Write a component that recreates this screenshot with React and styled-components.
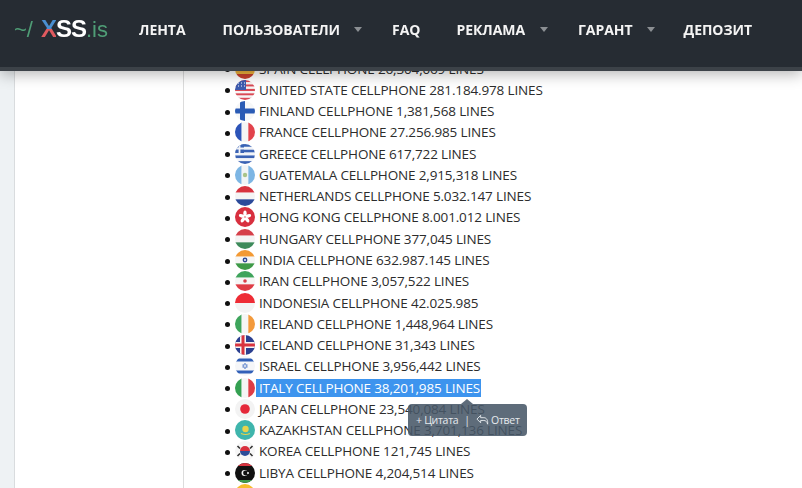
import React from 'react';
import styled, { createGlobalStyle } from 'styled-components';

const GlobalStyle = createGlobalStyle`
  html, body {
    margin: 0;
    height: 488px;
    overflow: hidden;
    background: #fff;
    font-family: "Open Sans", "Liberation Sans", sans-serif;
  }
`;

const Page = styled.div`
  display: grid;
  grid-template-columns: 15px 169px 1fr;
  height: 488px;
  overflow: hidden;
`;

const Gutter = styled.div`
  background: #eef2f4;
  border-right: 1px solid #d9dcde;
`;

const Sidebar = styled.aside`
  background: #fff;
  border-right: 1px solid #dcdcdc;
`;

const Content = styled.main`
  padding-top: 58px;
  min-width: 0;
`;

const Header = styled.header`
  position: fixed;
  top: 0;
  left: 0;
  right: 0;
  z-index: 5;
  height: 71px;
  display: flex;
  align-items: center;
  padding: 0 0 9px 14px;
  box-sizing: border-box;
  background: #262c33;
  border-bottom: 4px solid #3c4248;
  box-shadow: 0 3px 14px rgba(0, 0, 0, 0.3);
`;

const Logo = styled.div`
  display: flex;
  align-items: baseline;
  width: 125px;
  font-family: "Liberation Sans", Arial, sans-serif;
`;

const LogoThin = styled.span`
  color: #4f9d76;
  font-size: 22px;
  font-weight: 400;
  margin-right: ${({ $gap }) => $gap || 0}px;
`;

const LogoX = styled.span`
  font-size: 24px;
  font-weight: 700;
  letter-spacing: -1px;
  background: linear-gradient(#4a8fd0 0 50%, #e05a5f 50%);
  -webkit-background-clip: text;
  background-clip: text;
  color: transparent;
`;

const LogoBold = styled.span`
  font-size: 24px;
  font-weight: 700;
  letter-spacing: -1px;
  color: #fff;
`;

const Nav = styled.nav`
  display: flex;
  align-items: center;
`;

const NavItem = styled.a`
  color: #f4f4f4;
  font-size: 14px;
  font-weight: 700;
  letter-spacing: -0.05px;
  white-space: nowrap;
  margin-right: ${({ $gap }) => $gap}px;
`;

const Caret = styled.span`
  width: 0;
  height: 0;
  border-left: 4.5px solid transparent;
  border-right: 4.5px solid transparent;
  border-top: 5px solid #8b8f93;
  margin-right: ${({ $gap }) => $gap}px;
`;

const List = styled.ul`
  margin: 0;
  padding: 0 0 0 41px;
  list-style: none;
  position: relative;
`;

const Row = styled.li`
  height: 21.28px;
  display: flex;
  align-items: center;
  color: #2c2c2c;
  font-size: 13.5px;
  letter-spacing: -0.15px;
  white-space: nowrap;
`;

const Bullet = styled.span`
  width: 5px;
  height: 5px;
  flex: none;
  margin: 2px 5px 0 0;
  border-radius: 50%;
  background: #111;
`;

const FlagDisc = styled.svg`
  width: 20px;
  height: 20px;
  flex: none;
  margin-right: 4px;
  border-radius: 50%;
`;

const Label = styled.span`
  line-height: 18px;
  ${({ $on }) => $on && `
    background: #3d94ee;
    color: #fff;
    margin-left: -3px;
    padding: 0 1px 0 3px;
  `}
`;

const QuoteTip = styled.div`
  position: absolute;
  left: 224px;
  top: 346px;
  width: 119px;
  height: 32px;
  padding-left: 8px;
  box-sizing: border-box;
  display: flex;
  align-items: center;
  gap: 6px;
  border-radius: 4px;
  background: rgba(72, 88, 104, 0.88);
  color: #e6eaee;
  font-size: 10.5px;
  &::before {
    content: '';
    position: absolute;
    top: -5px;
    left: 53px;
    border-left: 6px solid transparent;
    border-right: 6px solid transparent;
    border-bottom: 5px solid rgba(72, 88, 104, 0.88);
  }
`;

const TipAction = styled.span`
  display: flex;
  align-items: center;
  gap: 2px;
  letter-spacing: -0.3px;
`;

const TipSep = styled.span`
  color: #dfe4e8;
`;

const H = ({ colors }) => {
  const h = 20 / colors.length;
  return colors.map((c, i) => <rect key={i} x="0" y={i * h} width="20" height={h} fill={c} />);
};

const V = ({ colors }) => {
  const w = 20 / colors.length;
  return colors.map((c, i) => <rect key={i} x={i * w} y="0" width={w} height="20" fill={c} />);
};

const flags = {
  spain: <H colors={['#c8402c', '#f0b33c', '#f0b33c', '#c8402c']} />,
  usa: (
    <>
      <H colors={['#d94a55', '#f5f5f5', '#d94a55', '#f5f5f5', '#d94a55', '#f5f5f5', '#d94a55', '#f5f5f5', '#d94a55']} />
      <rect width="11" height="10" fill="#3d5cb0" />
      <path d="M3 3h1M6 3h1M9 3h1M3 6h1M6 6h1M9 6h1" stroke="#fff" />
    </>
  ),
  finland: (
    <>
      <rect width="20" height="20" fill="#f6f7f8" />
      <rect x="5" width="5" height="20" fill="#2a5bb5" />
      <rect y="7.5" width="20" height="5" fill="#2a5bb5" />
    </>
  ),
  france: <V colors={['#2c54b8', '#f5f5f5', '#e2434c']} />,
  greece: (
    <>
      <H colors={['#3a62b4', '#f2f4f8', '#3a62b4', '#f2f4f8', '#3a62b4', '#f2f4f8', '#3a62b4']} />
      <rect width="9" height="9" fill="#3a62b4" />
      <path d="M4.5 0v9M0 4.5h9" stroke="#f2f4f8" strokeWidth="1.8" />
    </>
  ),
  guatemala: (
    <>
      <V colors={['#7db6e4', '#f1f4f6', '#7db6e4']} />
      <circle cx="10" cy="10" r="2.2" fill="#a9c48a" />
    </>
  ),
  netherlands: <H colors={['#d8333f', '#f4f4f4', '#2c4a9a']} />,
  hongkong: (
    <>
      <rect width="20" height="20" fill="#d8303f" />
      <g fill="#fff">
        <ellipse cx="10" cy="6.5" rx="1.7" ry="3" />
        <ellipse cx="10" cy="6.5" rx="1.7" ry="3" transform="rotate(72 10 10)" />
        <ellipse cx="10" cy="6.5" rx="1.7" ry="3" transform="rotate(144 10 10)" />
        <ellipse cx="10" cy="6.5" rx="1.7" ry="3" transform="rotate(216 10 10)" />
        <ellipse cx="10" cy="6.5" rx="1.7" ry="3" transform="rotate(288 10 10)" />
      </g>
    </>
  ),
  hungary: <H colors={['#d6404a', '#f4f4f4', '#3d8a5a']} />,
  india: (
    <>
      <H colors={['#f39a34', '#f6f6f6', '#3f9a48']} />
      <circle cx="10" cy="10" r="2.4" fill="#2f4a94" />
      <circle cx="10" cy="10" r="1" fill="#f6f6f6" />
    </>
  ),
  iran: (
    <>
      <H colors={['#3fa45c', '#f6f6f6', '#df3d46']} />
      <circle cx="10" cy="10" r="1.8" fill="#d9414a" />
    </>
  ),
  indonesia: <H colors={['#ee2c35', '#f3f3f3']} />,
  ireland: <V colors={['#3ea55c', '#f6f6f6', '#f39a3c']} />,
  iceland: (
    <>
      <rect width="20" height="20" fill="#2b3f90" />
      <rect x="5" width="6" height="20" fill="#f5f5f5" />
      <rect y="7" width="20" height="6" fill="#f5f5f5" />
      <rect x="6.5" width="3" height="20" fill="#d8333f" />
      <rect y="8.5" width="20" height="3" fill="#d8333f" />
    </>
  ),
  israel: (
    <>
      <rect width="20" height="20" fill="#f5f6f8" />
      <rect y="2.5" width="20" height="3" fill="#3160b8" />
      <rect y="14.5" width="20" height="3" fill="#3160b8" />
      <path d="M10 7l2.4 4.2H7.6zM10 13l-2.4-4.2h4.8z" fill="none" stroke="#6d8fcf" strokeWidth="0.8" />
    </>
  ),
  italy: <V colors={['#34a052', '#f5f5f5', '#df3d46']} />,
  japan: (
    <>
      <rect width="20" height="20" fill="#f3f3f3" />
      <circle cx="10" cy="10" r="4.8" fill="#e5283a" />
    </>
  ),
  kazakhstan: (
    <>
      <rect width="20" height="20" fill="#3fb5ac" />
      <circle cx="10.5" cy="9" r="3.2" fill="#e8d34c" />
      <path d="M6 13.5q4.500 2 9 0" stroke="#e8d34c" strokeWidth="1.2" fill="none" />
    </>
  ),
  korea: (
    <>
      <rect width="20" height="20" fill="#f6f6f6" />
      <path d="M5 10a5 5 0 0 1 10 0z" fill="#d9303e" />
      <path d="M5 10a5 5 0 0 0 10 0z" fill="#2b4b98" />
      <path d="M2.500 5l2.500 2.500M17.500 5L15 7.500M2.500 15L5 12.500M17.500 15L15 12.500" stroke="#333" strokeWidth="1.6" />
    </>
  ),
  libya: (
    <>
      <rect width="20" height="20" fill="#111" />
      <rect width="20" height="3" fill="#d8333f" />
      <rect y="17" width="20" height="3" fill="#3d9a4c" />
      <circle cx="9.500" cy="10" r="3" fill="#f5f5f5" />
      <circle cx="10.500" cy="10" r="2.400" fill="#111" />
      <circle cx="13" cy="10" r="1" fill="#f5f5f5" />
    </>
  ),
  lithuania: <H colors={['#f7bd2e', '#3d9a4c', '#d8333f']} />,
};

const rows = [
  ['spain', 'SPAIN CELLPHONE 26,304,069 LINES'],
  ['usa', 'UNITED STATE CELLPHONE 281.184.978 LINES'],
  ['finland', 'FINLAND CELLPHONE 1,381,568 LINES'],
  ['france', 'FRANCE CELLPHONE 27.256.985 LINES'],
  ['greece', 'GREECE CELLPHONE 617,722 LINES'],
  ['guatemala', 'GUATEMALA CELLPHONE 2,915,318 LINES'],
  ['netherlands', 'NETHERLANDS CELLPHONE 5.032.147 LINES'],
  ['hongkong', 'HONG KONG CELLPHONE 8.001.012 LINES'],
  ['hungary', 'HUNGARY CELLPHONE 377,045 LINES'],
  ['india', 'INDIA CELLPHONE 632.987.145 LINES'],
  ['iran', 'IRAN CELLPHONE 3,057,522 LINES'],
  ['indonesia', 'INDONESIA CELLPHONE 42.025.985'],
  ['ireland', 'IRELAND CELLPHONE 1,448,964 LINES'],
  ['iceland', 'ICELAND CELLPHONE 31,343 LINES'],
  ['israel', 'ISRAEL CELLPHONE 3,956,442 LINES'],
  ['italy', 'ITALY CELLPHONE 38,201,985 LINES', true],
  ['japan', 'JAPAN CELLPHONE 23,540,084 LINES'],
  ['kazakhstan', 'KAZAKHSTAN CELLPHONE 3,701,136 LINES'],
  ['korea', 'KOREA CELLPHONE 121,745 LINES'],
  ['libya', 'LIBYA CELLPHONE 4,204,514 LINES'],
  ['lithuania', ''],
];

const App = () => (
  <>
    <GlobalStyle />
    <Header>
      <Logo>
        <LogoThin $gap={8}>~/</LogoThin>
        <LogoX>X</LogoX>
        <LogoBold>SS</LogoBold>
        <LogoThin>.is</LogoThin>
      </Logo>
      <Nav>
        <NavItem $gap={37}>ЛЕНТА</NavItem>
        <NavItem $gap={14}>ПОЛЬЗОВАТЕЛИ</NavItem>
        <Caret $gap={30} />
        <NavItem $gap={36}>FAQ</NavItem>
        <NavItem $gap={15}>РЕКЛАМА</NavItem>
        <Caret $gap={30} />
        <NavItem $gap={14}>ГАРАНТ</NavItem>
        <Caret $gap={29} />
        <NavItem $gap={0}>ДЕПОЗИТ</NavItem>
      </Nav>
    </Header>
    <Page>
      <Gutter />
      <Sidebar />
      <Content>
        <List>
          {rows.map(([flag, text, selected]) => (
            <Row key={flag}>
              <Bullet />
              <FlagDisc viewBox="0 0 20 20">{flags[flag]}</FlagDisc>
              <Label $on={selected}>{text}</Label>
            </Row>
          ))}
          <QuoteTip>
            <TipAction>+ Цитата</TipAction>
            <TipSep>|</TipSep>
            <TipAction>
              <svg width="13" height="12" viewBox="0 0 14 12" fill="none" stroke="#e6eaee" strokeWidth="1">
                <path d="M5 1L1 5l4 4V6.500h3.500c2 0 3.500 1.500 4 4 .5-4-1-7-4-7H5z" />
              </svg>
              Ответ
            </TipAction>
          </QuoteTip>
        </List>
      </Content>
    </Page>
  </>
);

export default App;
